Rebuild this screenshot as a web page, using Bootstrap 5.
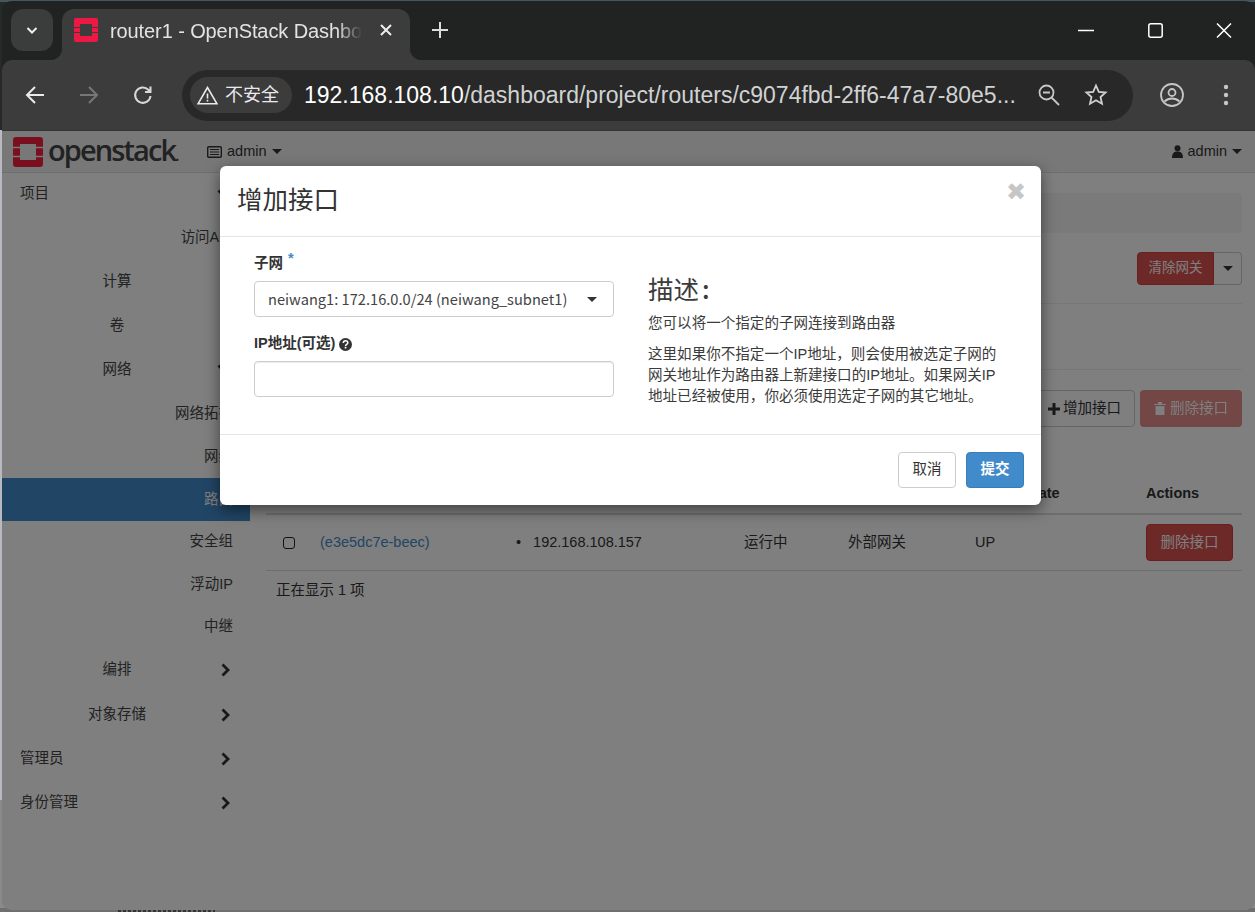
<!DOCTYPE html>
<html lang="zh-CN">
<head>
<meta charset="utf-8">
<title>router1 - OpenStack Dashboard</title>
<link href="https://cdn.jsdelivr.net/npm/bootstrap@5.3.0/dist/css/bootstrap.min.css" rel="stylesheet">
<style>
html,body{height:100%;margin:0;overflow:hidden}
body{background:linear-gradient(180deg,#46565f 0,#46565f 2px,#26292a 2px,#26292a 130px,#b9b9c2 130px,#b9b9c2 800px,#8a8a8a 800px,#8a8a8a 908px,#6f6f6f 908px);font-family:"Liberation Sans","Noto Sans CJK SC",sans-serif;font-size:14.5px;color:#333;position:relative}
.deskbits{position:absolute;left:118px;top:908px;width:97px;height:4px;background:repeating-linear-gradient(90deg,#333 0 3px,#6f6f6f 3px 5px)}
.win{height:909px;margin-left:2px;margin-top:1px;background:#202322;border-radius:10px;overflow:hidden;display:flex;flex-direction:column;position:relative}
.tabstrip{height:59px;flex:none;display:flex;align-items:flex-start;color:#fff}
.tablist-btn{width:42px;height:42px;margin:8px 0 0 9px;border-radius:12px;background:#3b3c3c;display:flex;align-items:center;justify-content:center}
.chrome-tab{width:348px;height:51px;margin:8px 0 0 9px;background:#3c3c3c;border-radius:12px 12px 0 0;display:flex;align-items:center;padding:0 18px 9px 12px;position:relative}
.chrome-tab::before,.chrome-tab::after{content:"";position:absolute;bottom:0;width:12px;height:12px}
.chrome-tab::before{left:-12px;background:radial-gradient(circle at 0 0,transparent 12px,#3c3c3c 12.5px)}
.chrome-tab::after{right:-12px;background:radial-gradient(circle at 100% 0,transparent 12px,#3c3c3c 12.5px)}
.tab-title{font-size:20px;margin-left:12px;width:252px;white-space:nowrap;overflow:hidden;color:#e3e3e3;letter-spacing:-.1px;padding-top:1px;-webkit-mask-image:linear-gradient(90deg,#000 90%,transparent)}
.plus{margin:21px 0 0 22px;line-height:0}
.winctl{margin-left:auto;display:flex;align-items:center;gap:53px;padding:22px 23px 0 0}
.toolbar{height:71px;flex:none;background:#3c3c3c;border-radius:10px 10px 0 0;display:flex;align-items:center;border-bottom:1px solid #333;color:#e8eaed}
.navico{line-height:0}
.nv-back{margin-left:23px}
.nv-fwd,.nv-rel{margin-left:34px}
.omnibox{width:951px;height:51px;border-radius:26px;background:#282828;display:flex;align-items:center;margin-left:29px;padding:0 0 0 8px;flex:none}
.secchip{height:36px;width:102px;background:#3c3c3c;border-radius:18px;display:flex;align-items:center;padding-left:7px;gap:7px;font-size:18px;color:#e8eaed;flex:none}
.urltext{font-size:23px;color:#fff;margin-left:12px;width:718px;white-space:nowrap;overflow:hidden}
.urltext i{font-style:normal;color:#d0d2d2}
.nv-zoom{margin-left:16px}
.nv-star{margin-left:24px}
.nv-prof{margin-left:26px}
.nv-dots{margin-left:38px}
.page{flex:1;background:#fff;position:relative;overflow:hidden}
.topnav{height:42px;background:#f0f0f0;border-bottom:1px solid #ddd;display:flex;align-items:center;padding-left:11px;color:#333}
.oslogo{font-size:29px;letter-spacing:-1.9px;color:#444;font-family:"Open Sans","Liberation Sans",sans-serif;font-weight:600;line-height:1;margin:-5px 0 0 5px;width:130px;white-space:nowrap}
.os-dot{font-size:14px;letter-spacing:0;font-weight:700}
.proj{margin-left:29px;display:flex;align-items:center;gap:5px}
.usr{margin-left:auto;margin-right:13px;display:flex;align-items:center;gap:5px}
.caret-d{width:0;height:0;border-left:5px solid transparent;border-right:5px solid transparent;border-top:5px solid #333;display:inline-block}
.mainrow{display:flex;height:736px}
.side{width:248px;flex:none}
.sitem{height:44.3px;display:flex;align-items:center;padding:0 17px 0 18px;color:#444;white-space:nowrap;position:relative}
.sitem.first{height:44px;padding-bottom:2px}
.sitem.lvl2{justify-content:center;padding:0 36px 0 18px}
.sitem.lvl3{justify-content:flex-end;padding-right:17px;height:42.3px}
.sitem.lvl3.tall{height:43px}
.sitem.on{background:#428bca;color:#fff}
.chev{position:absolute;right:19px;top:50%;margin-top:-7px;line-height:0}
.content{flex:1;min-width:0;padding:0 13px 0 16px;position:relative}
.crumbbar{height:40px;margin-top:20px;background:#f5f5f5;border-radius:4px}
.titleline{height:71px;border-bottom:1px solid #eee;display:flex;justify-content:flex-end;align-items:center}
.btn.btn-clear{background:#d9534f;color:#fff;border:1px solid #d43f3a;border-radius:4px 0 0 4px;font-size:13.5px;padding:0;width:77px;height:33px}
.btn.btn-cdrop{width:28px;height:33px;padding:0;border:1px solid #ccc;border-left:0;border-radius:0 4px 4px 0;background:#fff;display:flex;align-items:center;justify-content:center}
.tabsline{height:66px;border-bottom:1px solid #eee}
.actionsline{height:100px;padding-top:20px;display:flex;justify-content:flex-end;gap:5px}
.btn.btn-add{height:37px;width:130px;background:#fff;border:1px solid #ccc;border-radius:4px;display:flex;align-items:center;justify-content:flex-end;padding:0 13px 0 0;gap:3px;color:#333;font-size:14.5px}
.btn.btn-del{height:37px;width:102px;background:#d9534f;border:0;opacity:.65;color:#fff;border-radius:4px;display:flex;align-items:center;justify-content:center;gap:4px;padding:0;font-size:14.5px}
.ttable{width:100%;table-layout:fixed;margin:0}
.ttable th,.ttable td{padding:0 10px;vertical-align:middle;border:0;background:transparent;color:#333;font-size:14.5px;font-weight:400;box-shadow:none}
.ttable th{height:44px;padding-top:4px;font-weight:700;border-bottom:2px solid #ddd}
.ttable td{height:56px;padding-top:1px;border-bottom:1px solid #ddd}
.ttable th:nth-child(1){width:44px}
.ttable th:nth-child(2){width:196px}
.ttable th:nth-child(3){width:228px}
.ttable th:nth-child(4){width:104px}
.ttable th:nth-child(5){width:127px}
.ttable th:nth-child(6){width:171px}
.ttable td:first-child{padding-left:17px}
.tick{width:12px;height:12px;border:1.5px solid #222;border-radius:3px;display:block}
.plink{color:#428bca;text-decoration:none}
.ipdot{margin-right:12px}
.btn.btn-delrow{background:#d9534f;border:1px solid #d43f3a;border-radius:4px;color:#fff;height:37px;width:87px;padding:0;font-size:14.5px}
.tfoot{padding:9px 10px;color:#333}
.shade{position:absolute;inset:0;background:rgba(0,0,0,.5)}
.dlg{position:absolute;left:218px;top:35px;width:821px;border:0;border-radius:6px;box-shadow:0 5px 15px rgba(0,0,0,.5);background:#fff;color:#3b3b3b}
.dlg-head{height:71px;padding:0 17px 6px;border-bottom:1px solid #e5e5e5;display:flex;align-items:center;position:relative}
.dlg-head h4{font-size:25.5px;font-weight:400;margin:0;color:#333;font-family:"Noto Sans CJK SC",sans-serif}
.xclose{position:absolute;right:15px;top:8px;font-size:24px;font-weight:700;color:#c6c6c6;line-height:36px;font-family:"DejaVu Sans",sans-serif;background:none;border:0;padding:0}
.dlg-body{height:198px;border-bottom:1px solid #e5e5e5;display:flex;padding:15px 34px 0}
.dlg-left{width:360px;flex:none}
.dlg-right{width:360px;margin-left:34px;padding-top:19px}
.dlg-right h3{font-size:25.5px;font-weight:400;margin:0 0 8px;line-height:34px;font-family:"Noto Sans CJK SC",sans-serif}
.cn-colon{margin-left:3px;font-weight:500}
.dlg-right p{margin:0 0 10px;line-height:21px;font-size:14.55px}
.flabel{font-weight:700;display:block;margin:0 0 8px;height:21px;line-height:22px;color:#333}
.req{color:#428bca;position:relative;top:-5px;margin-left:1px}
.selectlike{height:36px;border:1px solid #ccc;border-radius:4px;display:flex;align-items:center;justify-content:space-between;padding:0 16px 0 13px;font-family:"Noto Sans CJK SC",sans-serif;font-size:14.65px;color:#444;margin-bottom:15px}
.form-control.inputlike{height:36px;border:1px solid #ccc;border-radius:4px;padding:0 12px;box-shadow:inset 0 1px 1px rgba(0,0,0,.075)}
.dlg-foot{height:70px;display:flex;justify-content:flex-end;align-items:center;gap:10px;padding:0 17px}
.btn.btn-cancel,.btn.btn-submit{width:58px;height:36px;padding:0;border-radius:4px;font-size:14.5px}
.btn.btn-cancel{background:#fff;border:1px solid #ccc;color:#333}
.btn.btn-submit{background:#428bca;border:1px solid #357ebd;color:#fff;font-weight:700}
</style>
</head>
<body>
<div class="deskbits"></div>
<div class="win">
  <div class="tabstrip">
    <div class="tablist-btn"><svg width="14" height="14" viewBox="0 0 14 14"><path d="M2.500 5l4.500 4.500L11.500 5" fill="none" stroke="#eee" stroke-width="2"/></svg></div>
    <div class="chrome-tab">
      <svg width="24" height="24" viewBox="0 0 24 24"><path fill-rule="evenodd" fill="#ed1944" d="M2 0h20a2 2 0 0 1 2 2v20a2 2 0 0 1-2 2H2a2 2 0 0 1-2-2V2a2 2 0 0 1 2-2zM6 6v12h12V6z"/><path d="M0 9.500h6M18 9.500h6M0 14.500h6M18 14.500h6" stroke="#3c3c3c" stroke-width="1.200"/></svg>
      <span class="tab-title">router1 - OpenStack Dashboard</span>
      <svg width="12" height="12" viewBox="0 0 12 12" class="ms-auto"><path d="M1 1l10 10M11 1L1 11" stroke="#eee" stroke-width="2"/></svg>
    </div>
    <div class="plus"><svg width="16" height="16" viewBox="0 0 16 16"><path d="M8 0v16M0 8h16" stroke="#ddd" stroke-width="2"/></svg></div>
    <div class="winctl">
      <svg width="17" height="15" viewBox="0 0 17 15"><path d="M0 7.500h16" stroke="#fff" stroke-width="1.500"/></svg>
      <svg width="15" height="15" viewBox="0 0 15 15"><rect x=".8" y=".8" width="13.400" height="13.400" rx="2" fill="none" stroke="#fff" stroke-width="1.500"/></svg>
      <svg width="16" height="15" viewBox="0 0 16 15"><path d="M1 .5l14 14M15 .5l-14 14" stroke="#fff" stroke-width="1.500"/></svg>
    </div>
  </div>
  <div class="toolbar">
    <span class="navico nv-back"><svg width="20" height="20" viewBox="0 0 20 20"><path d="M19 10H2M10 2l-8 8 8 8" fill="none" stroke="#e8eaed" stroke-width="2"/></svg></span>
    <span class="navico nv-fwd"><svg width="20" height="20" viewBox="0 0 20 20"><path d="M1 10h17M10 2l8 8-8 8" fill="none" stroke="#777" stroke-width="2"/></svg></span>
    <span class="navico nv-rel"><svg width="20" height="20" viewBox="0 0 20 20"><path d="M17.500 11A7.700 7.700 0 1 1 15.300 4.700L17.500 7M17.500 1.500V7H12" fill="none" stroke="#d8d8d8" stroke-width="2"/></svg></span>
    <div class="omnibox">
      <div class="secchip"><svg width="21" height="19" viewBox="0 0 21 19"><path d="M10.500 1.500L1 17.800h19zM10.500 7.500v5M10.500 13.700v1.700" fill="none" stroke="#e8eaed" stroke-width="1.600"/></svg><span>不安全</span></div>
      <div class="urltext">192.168.108.10<i>/dashboard/project/routers/c9074fbd-2ff6-47a7-80e5...</i></div>
      <span class="navico nv-zoom"><svg width="22" height="22" viewBox="0 0 22 22"><circle cx="8.500" cy="8.500" r="7" fill="none" stroke="#c4c7c5" stroke-width="1.800"/><path d="M5 8.500h7M13.500 13.500l7.500 7.500" fill="none" stroke="#c4c7c5" stroke-width="1.800"/></svg></span>
      <span class="navico nv-star"><svg width="24" height="24" viewBox="0 0 24 24"><path d="M12 2.500l2.800 6.300 6.800.7-5.100 4.500 1.500 6.800L12 17.300l-6 3.500 1.500-6.800-5.100-4.500 6.800-.7z" fill="none" stroke="#d0d0d0" stroke-width="1.800"/></svg></span>
    </div>
    <span class="navico nv-prof"><svg width="26" height="26" viewBox="0 0 26 26"><circle cx="13" cy="13" r="11" fill="none" stroke="#c4c7c5" stroke-width="1.800"/><circle cx="13" cy="10.500" r="3.500" fill="none" stroke="#c4c7c5" stroke-width="1.800"/><path d="M5.500 19.500c4-4 11-4 15 0" fill="none" stroke="#c4c7c5" stroke-width="1.800"/></svg></span>
    <span class="navico nv-dots"><svg width="6" height="22" viewBox="0 0 6 22"><circle cx="3" cy="3" r="2.200" fill="#c4c7c5"/><circle cx="3" cy="11" r="2.200" fill="#c4c7c5"/><circle cx="3" cy="19" r="2.200" fill="#c4c7c5"/></svg></span>
  </div>
  <div class="page">
    <div class="topnav">
      <svg width="30" height="30" viewBox="0 0 30 30"><path fill-rule="evenodd" fill="#f5203c" d="M3 0h24a3 3 0 0 1 3 3v24a3 3 0 0 1-3 3H3a3 3 0 0 1-3-3V3a3 3 0 0 1 3-3zM7 7v16h16V7z"/><path d="M0 10.500h7M23 10.500h7M0 19.500h7M23 19.500h7" stroke="#f0f0f0" stroke-width="1.400"/></svg>
      <span class="oslogo">openstack<span class="os-dot">.</span></span>
      <span class="proj"><svg width="15" height="12" viewBox="0 0 15 12"><rect x=".7" y=".7" width="13.600" height="10.600" rx="1" fill="none" stroke="#333" stroke-width="1.400"/><path d="M3 3.500h9M3 6h9M3 8.500h9" stroke="#333" stroke-width="1.200"/></svg>admin <i class="caret-d"></i></span>
      <span class="usr"><svg width="11" height="13" viewBox="0 0 11 13"><circle cx="5.500" cy="3.200" r="3" fill="#333"/><path d="M0 13c0-5 2-6.500 5.500-6.500S11 8 11 13z" fill="#333"/></svg>admin <i class="caret-d"></i></span>
    </div>
    <div class="mainrow">
      <div class="side">
        <div class="sitem first">项目<span class="chev"><svg width="14" height="11" viewBox="0 0 14 11"><path d="M1.500 2.500L7 8l5.500-5.500" fill="none" stroke="#333" stroke-width="2.800"/></svg></span></div>
        <div class="sitem lvl3">访问API</div>
        <div class="sitem lvl2">计算</div>
        <div class="sitem lvl2">卷</div>
        <div class="sitem lvl2">网络<span class="chev"><svg width="14" height="11" viewBox="0 0 14 11"><path d="M1.500 2.500L7 8l5.500-5.500" fill="none" stroke="#333" stroke-width="2.800"/></svg></span></div>
        <div class="sitem lvl3 tall">网络拓扑</div>
        <div class="sitem lvl3 tall">网络</div>
        <div class="sitem lvl3 tall on">路由</div>
        <div class="sitem lvl3">安全组</div>
        <div class="sitem lvl3">浮动IP</div>
        <div class="sitem lvl3">中继</div>
        <div class="sitem lvl2">编排<span class="chev"><svg width="11" height="14" viewBox="0 0 11 14"><path d="M2.500 1.500L8 7l-5.500 5.500" fill="none" stroke="#333" stroke-width="2.800"/></svg></span></div>
        <div class="sitem lvl2">对象存储<span class="chev"><svg width="11" height="14" viewBox="0 0 11 14"><path d="M2.500 1.500L8 7l-5.500 5.500" fill="none" stroke="#333" stroke-width="2.800"/></svg></span></div>
        <div class="sitem">管理员<span class="chev"><svg width="11" height="14" viewBox="0 0 11 14"><path d="M2.500 1.500L8 7l-5.500 5.500" fill="none" stroke="#333" stroke-width="2.800"/></svg></span></div>
        <div class="sitem">身份管理<span class="chev"><svg width="11" height="14" viewBox="0 0 11 14"><path d="M2.500 1.500L8 7l-5.500 5.500" fill="none" stroke="#333" stroke-width="2.800"/></svg></span></div>
      </div>
      <div class="content">
        <div class="crumbbar"></div>
        <div class="titleline">
          <button class="btn btn-clear">清除网关</button><button class="btn btn-cdrop"><i class="caret-d"></i></button>
        </div>
        <div class="tabsline"></div>
        <div class="actionsline">
          <button class="btn btn-add"><svg width="12" height="12" viewBox="0 0 12 12"><path d="M6 0v12M0 6h12" stroke="#333" stroke-width="3"/></svg>增加接口</button>
          <button class="btn btn-del"><svg width="12" height="13" viewBox="0 0 12 13"><path d="M0 2h12v1H0zM4 0h4v2H4zM1.500 4h9v9h-9z" fill="#fff"/></svg>删除接口</button>
        </div>
        <table class="table ttable">
          <thead><tr><th></th><th>名称</th><th>固定IP</th><th>状态</th><th>类型</th><th>Admin State</th><th>Actions</th></tr></thead>
          <tbody><tr><td><span class="tick"></span></td><td><a class="plink" href="#">(e3e5dc7e-beec)</a></td><td><span class="ipdot">•</span>192.168.108.157</td><td>运行中</td><td>外部网关</td><td>UP</td><td><button class="btn btn-delrow">删除接口</button></td></tr></tbody>
        </table>
        <div class="tfoot">正在显示 1 项</div>
      </div>
    </div>
    <div class="shade"></div>
    <div class="dlg modal-content">
      <div class="dlg-head"><h4>增加接口</h4><button class="xclose">✖</button></div>
      <div class="dlg-body">
        <div class="dlg-left">
          <label class="flabel">子网 <span class="req">*</span></label>
          <div class="selectlike"><span>neiwang1: 172.16.0.0/24 (neiwang_subnet1)</span><i class="caret-d"></i></div>
          <label class="flabel">IP地址(可选) <svg width="13" height="13" viewBox="0 0 13 13"><circle cx="6.500" cy="6.500" r="6.500" fill="#333"/><path d="M4.300 5c0-3 4.500-3 4.500-.3 0 1.800-2.200 1.600-2.200 3.200" fill="none" stroke="#fff" stroke-width="1.500"/><rect x="5.700" y="8.800" width="1.700" height="1.700" fill="#fff"/></svg></label>
          <input class="form-control inputlike" type="text">
        </div>
        <div class="dlg-right">
          <h3>描述<span class="cn-colon">:</span></h3>
          <p>您可以将一个指定的子网连接到路由器</p>
          <p>这里如果你不指定一个IP地址，则会使用被选定子网的网关地址作为路由器上新建接口的IP地址。如果网关IP地址已经被使用，你必须使用选定子网的其它地址。</p>
        </div>
      </div>
      <div class="dlg-foot">
        <button class="btn btn-cancel">取消</button>
        <button class="btn btn-submit">提交</button>
      </div>
    </div>
  </div>
</div>
</body>
</html>
